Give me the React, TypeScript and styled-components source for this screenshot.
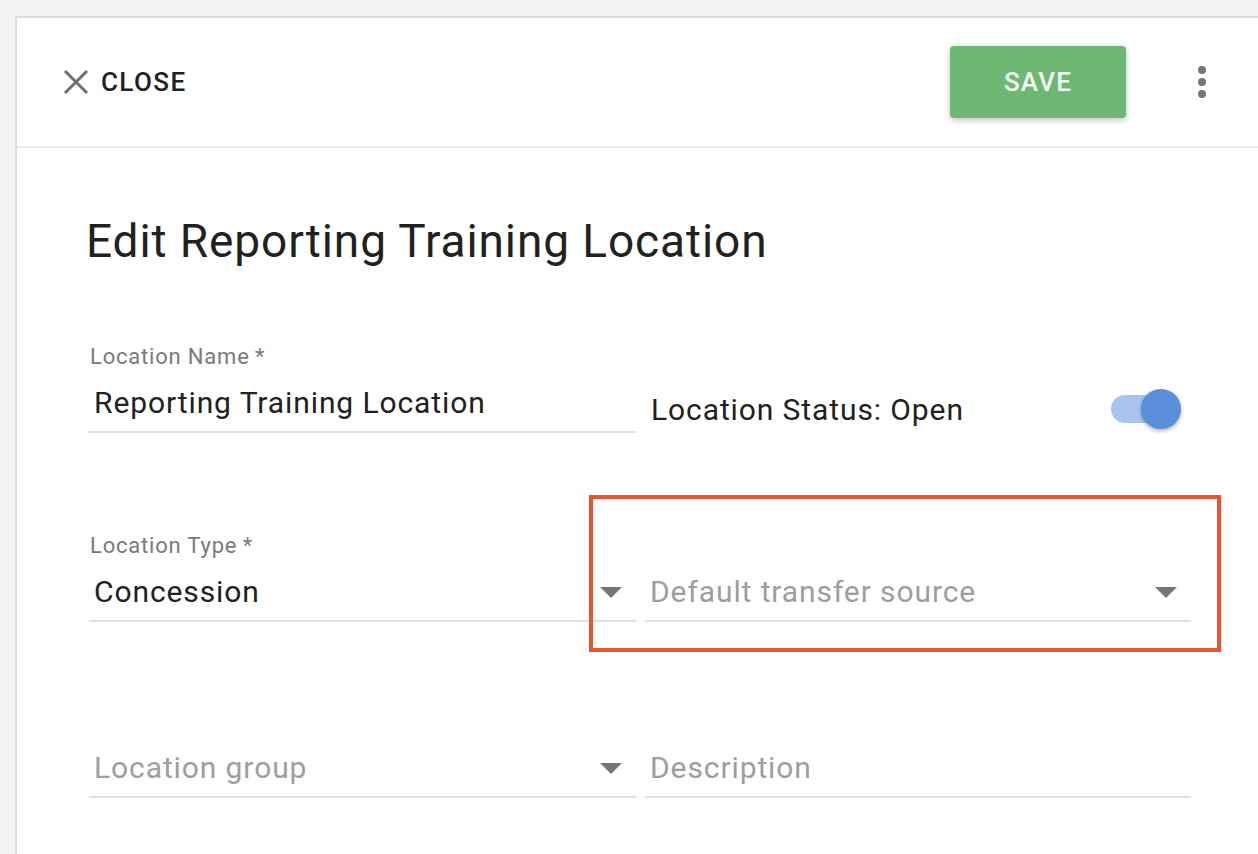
import styled, { createGlobalStyle } from "styled-components";

const GlobalStyle = createGlobalStyle`
  html, body {
    margin: 0;
    padding: 0;
    background: #f2f3f5;
    font-family: Roboto, "Liberation Sans", Arial, sans-serif;
  }
  * { box-sizing: border-box; }
`;

const Page = styled.div`
  width: 1258px;
  height: 854px;
  overflow: hidden;
  padding: 16px 0 0 15px;
`;

const Card = styled.div`
  background: #fff;
  height: 100%;
  border-top: 2px solid #dcdcdc;
  border-left: 2px solid #dcdcdc;
`;

const Header = styled.div`
  height: 130px;
  display: flex;
  align-items: center;
  padding: 0 52px 0 46px;
  border-bottom: 2px solid #ececec;
`;

const CloseButton = styled.button`
  display: flex;
  align-items: center;
  gap: 12px;
  border: none;
  background: none;
  padding: 0;
  font-family: inherit;
  font-size: 26px;
  font-weight: 500;
  letter-spacing: 1.4px;
  color: #212121;
  cursor: pointer;
`;

const Spacer = styled.div`
  flex: 1;
`;

const SaveButton = styled.button`
  width: 176px;
  height: 72px;
  border: none;
  border-radius: 4px;
  background: #6fb873;
  color: #f3faf3;
  font-family: inherit;
  font-size: 26px;
  font-weight: 500;
  letter-spacing: 1.2px;
  box-shadow: 0 2px 6px rgba(0, 0, 0, 0.25);
  margin-right: 72px;
  cursor: pointer;
`;

const Kebab = styled.div`
  display: flex;
  flex-direction: column;
  gap: 4px;
`;

const Dot = styled.span`
  width: 8px;
  height: 8px;
  border-radius: 50%;
  background: #757575;
`;

const Body = styled.div`
  padding: 67px 0 0 72px;
`;

const Title = styled.h1`
  margin: 0 0 78px -3px;
  font-size: 46px;
  line-height: 52px;
  font-weight: 400;
  letter-spacing: 0.9px;
  color: #212121;
`;

const Row = styled.div<{ $gap: number }>`
  position: relative;
  display: grid;
  grid-template-columns: 547px 546px;
  column-gap: 9px;
  margin-bottom: ${(p) => p.$gap}px;
`;

const Field = styled.div`
  display: flex;
  flex-direction: column;
`;

const Label = styled.label`
  font-size: 22px;
  line-height: 24px;
  letter-spacing: 0.8px;
  color: #7a7a7a;
  padding-left: 1px;
  margin-bottom: 16px;
`;

const InputRow = styled.div`
  display: flex;
  align-items: center;
  height: 36px;
  padding: 0 14px 0 5px;
  margin-bottom: 10px;
`;

const Value = styled.span<{ $placeholder?: boolean }>`
  flex: 1;
  font-size: 30px;
  line-height: 36px;
  letter-spacing: 0.9px;
  color: ${(p) => (p.$placeholder ? "#9e9e9e" : "#212121")};
`;

const Underline = styled.div`
  height: 2px;
  background: #e0e0e0;
`;

const StatusRow = styled.div`
  display: flex;
  align-items: center;
  justify-content: space-between;
  height: 40px;
  margin-top: 44px;
  padding: 0 10px 0 6px;
  font-size: 30px;
  letter-spacing: 0.9px;
  color: #212121;
`;

const Track = styled.div`
  position: relative;
  width: 60px;
  height: 28px;
  border-radius: 14px;
  background: #a9c5ef;
  margin-right: 10px;
`;

const Thumb = styled.div`
  position: absolute;
  top: -6px;
  right: -10px;
  width: 40px;
  height: 40px;
  border-radius: 50%;
  background: #5b8fdc;
  box-shadow: 0 2px 4px rgba(0, 0, 0, 0.3);
`;

const Highlight = styled.div`
  position: absolute;
  left: 500px;
  top: -39px;
  width: 632px;
  height: 157px;
  border: 4px solid #e9552f;
  pointer-events: none;
`;

const Arrow = () => (
  <svg width="22" height="11" viewBox="0 0 22 11">
    <path d="M0 0 L22 0 L11 11 Z" fill="#757575" />
  </svg>
);

type TextFieldProps = {
  label?: string;
  value: string;
  placeholder?: boolean;
  select?: boolean;
};

const TextField = ({ label, value, placeholder, select }: TextFieldProps) => (
  <Field>
    {label && <Label>{label}&thinsp;*</Label>}
    <InputRow>
      <Value $placeholder={placeholder}>{value}</Value>
      {select && <Arrow />}
    </InputRow>
    <Underline />
  </Field>
);

export default function App() {
  return (
    <>
      <GlobalStyle />
      <Page>
        <Card>
          <Header>
            <CloseButton>
              <svg width="26" height="26" viewBox="0 0 26 26">
                <path d="M2 2 L24 24 M24 2 L2 24" stroke="#6f6f6f" strokeWidth="3" />
              </svg>
              CLOSE
            </CloseButton>
            <Spacer />
            <SaveButton>SAVE</SaveButton>
            <Kebab>
              <Dot />
              <Dot />
              <Dot />
            </Kebab>
          </Header>
          <Body>
            <Title>Edit Reporting Training Location</Title>
            <Row $gap={101}>
              <TextField label="Location Name" value="Reporting Training Location" />
              <StatusRow>
                <span>Location Status: Open</span>
                <Track>
                  <Thumb />
                </Track>
              </StatusRow>
            </Row>
            <Row $gap={128}>
              <TextField label="Location Type" value="Concession" select />
              <Field>
                <Label>&nbsp;</Label>
                <InputRow>
                  <Value $placeholder>Default transfer source</Value>
                  <Arrow />
                </InputRow>
                <Underline />
              </Field>
              <Highlight />
            </Row>
            <Row $gap={0}>
              <TextField value="Location group" placeholder select />
              <TextField value="Description" placeholder />
            </Row>
          </Body>
        </Card>
      </Page>
    </>
  );
}
